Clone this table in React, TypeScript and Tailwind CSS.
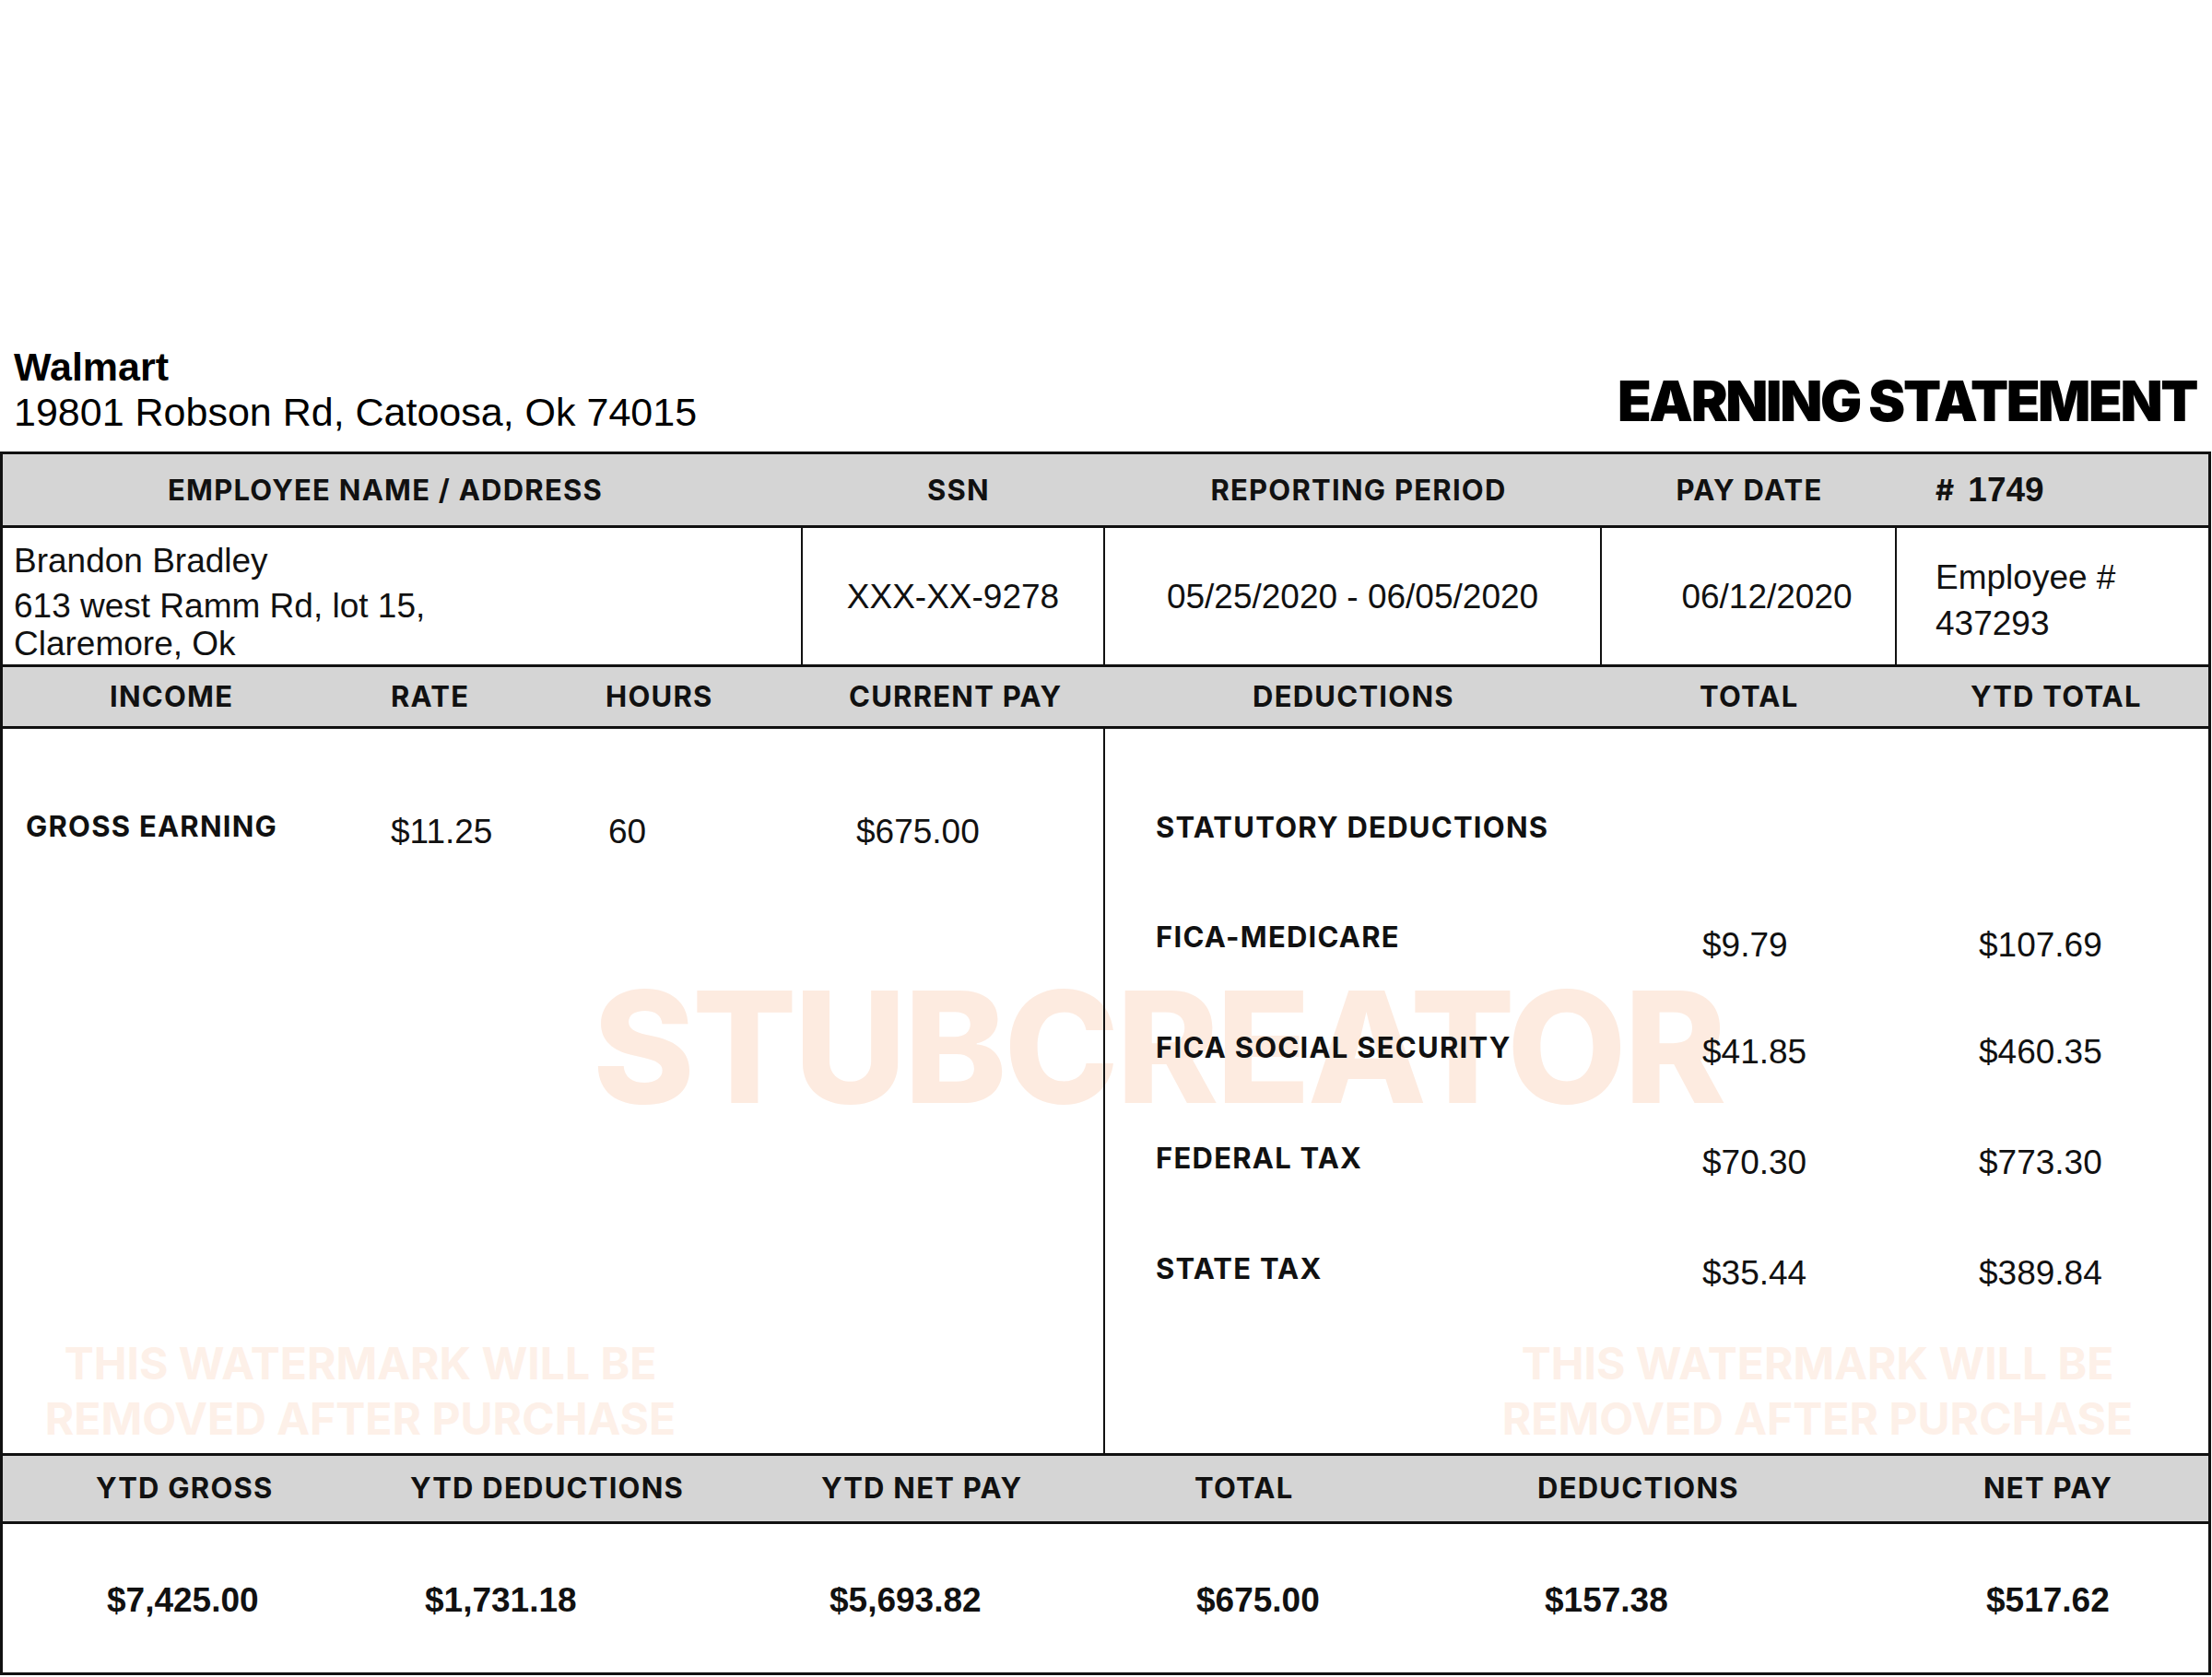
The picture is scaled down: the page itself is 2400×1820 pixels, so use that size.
const head = "font-['Inter',sans-serif] font-bold text-[31px] tracking-[0.04em] leading-none text-[#111]"
const arial = "font-['Liberation_Sans',Arial,sans-serif] text-[37px] leading-none text-[#111]"
const arialBold = "font-['Liberation_Sans',Arial,sans-serif] font-bold text-[37px] leading-none text-[#111]"

const deductions = [
  { label: 'FICA-MEDICARE', total: '$9.79', ytd: '$107.69' },
  { label: 'FICA SOCIAL SECURITY', total: '$41.85', ytd: '$460.35' },
  { label: 'FEDERAL TAX', total: '$70.30', ytd: '$773.30' },
  { label: 'STATE TAX', total: '$35.44', ytd: '$389.84' },
]

const summary = [
  { label: 'YTD GROSS', value: '$7,425.00', w: 'w-[442px]', hp: 'pl-[101px]', vp: 'pl-[113px]' },
  { label: 'YTD DEDUCTIONS', value: '$1,731.18', w: 'w-[446px]', hp: 'pl-0', vp: 'pl-[16px]' },
  { label: 'YTD NET PAY', value: '$5,693.82', w: 'w-[405px]', hp: 'pl-0', vp: 'pl-[9px]' },
  { label: 'TOTAL', value: '$675.00', w: 'w-[372px]', hp: 'pl-0', vp: 'pl-[2px]' },
  { label: 'DEDUCTIONS', value: '$157.38', w: 'w-[484px]', hp: 'pl-0', vp: 'pl-[8px]' },
  { label: 'NET PAY', value: '$517.62', w: 'flex-1', hp: 'pl-0', vp: 'pl-[3px]' },
]

function Watermark({ className }: { className: string }) {
  return (
    <div
      className={`absolute z-0 w-[800px] text-center font-['Inter',sans-serif] font-bold text-[48px] leading-[60px] text-[#fdf0e8] ${className}`}
    >
      THIS WATERMARK WILL BE
      <br />
      REMOVED AFTER PURCHASE
    </div>
  )
}

export default function App() {
  return (
    <div className="w-[2400px] h-[1820px] bg-white flex flex-col">
      {/* company + title */}
      <div className="h-[490px] flex items-end justify-between pb-[18px] pl-[15px] pr-[17px]">
        <div className="font-['Liberation_Sans',Arial,sans-serif] text-[43px] leading-[49px] text-black">
          <div className="font-bold">Walmart</div>
          <div>19801 Robson Rd, Catoosa, Ok 74015</div>
        </div>
        <div className="mb-[7px] font-['Inter',sans-serif] font-black text-[60px] leading-none tracking-[-0.04em] text-black">
          EARNING STATEMENT
        </div>
      </div>

      <div className="w-[2399px] border-[3px] border-[#111] flex flex-col">
        {/* header row 1 */}
        <div className="h-[77px] flex bg-[#d5d5d5]">
          <div className="w-[868px] flex items-center justify-center pr-[38px]">
            <span className={head}>EMPLOYEE NAME / ADDRESS</span>
          </div>
          <div className="w-[328px] flex items-center justify-center pl-[10px]">
            <span className={head}>SSN</span>
          </div>
          <div className="w-[539px] flex items-center justify-center pl-[11px]">
            <span className={head}>REPORTING PERIOD</span>
          </div>
          <div className="w-[320px] flex items-center justify-center">
            <span className={head}>PAY DATE</span>
          </div>
          <div className="flex-1 flex items-center pl-[42px] gap-[14px]">
            <span className={head}>#</span>
            <span className={arialBold}>1749</span>
          </div>
        </div>

        {/* employee info */}
        <div className="h-[151px] flex border-t-[3px] border-[#111]">
          <div className="w-[868px] border-r-2 border-[#111] pl-[12px] pt-[15px] font-['Liberation_Sans',Arial,sans-serif] text-[37px] leading-[41px] text-[#111]">
            <div>Brandon Bradley</div>
            <div className="mt-[8px]">613 west Ramm Rd, lot 15,</div>
            <div>Claremore, Ok</div>
          </div>
          <div className="w-[328px] border-r-2 border-[#111] flex items-center justify-center">
            <span className={arial}>XXX-XX-9278</span>
          </div>
          <div className="w-[539px] border-r-2 border-[#111] flex items-center justify-center">
            <span className={arial}>05/25/2020 - 06/05/2020</span>
          </div>
          <div className="w-[320px] border-r-2 border-[#111] flex items-center justify-center pl-[40px]">
            <span className={arial}>06/12/2020</span>
          </div>
          <div className="flex-1 flex items-center pl-[42px]">
            <div className="mt-[10px] font-['Liberation_Sans',Arial,sans-serif] text-[37px] leading-[50px] text-[#111]">
              <div>Employee #</div>
              <div>437293</div>
            </div>
          </div>
        </div>

        {/* header row 2 */}
        <div className="h-[67px] flex items-center bg-[#d5d5d5] border-t-[3px] border-[#111]">
          <div className="w-[421px] pl-[116px]"><span className={head}>INCOME</span></div>
          <div className="w-[233px]"><span className={head}>RATE</span></div>
          <div className="w-[264px]"><span className={head}>HOURS</span></div>
          <div className="w-[278px]"><span className={head}>CURRENT PAY</span></div>
          <div className="w-[645px] pl-[160px]"><span className={head}>DEDUCTIONS</span></div>
          <div className="w-[294px]"><span className={head}>TOTAL</span></div>
          <div className="flex-1"><span className={head}>YTD TOTAL</span></div>
        </div>

        {/* body */}
        <div className="relative isolate h-[789px] flex border-t-[3px] border-[#111]">
          <div className="absolute z-0 left-[640px] top-[261px] font-['Inter',sans-serif] font-extrabold text-[168px] leading-none tracking-[-0.018em] text-[#fdebe0]">
            STUBCREATOR
          </div>
          <Watermark className="left-[-12px] top-[659px]" />
          <Watermark className="left-[1569px] top-[659px]" />

          <div className="relative z-10 w-[1196px] border-r-2 border-[#111] pt-[46px]">
            <div className="h-[120px] flex items-center">
              <div className="w-[421px] pl-[25px]"><span className={head}>GROSS EARNING</span></div>
              <div className="w-[236px] mt-[10px]"><span className={arial}>$11.25</span></div>
              <div className="w-[269px] mt-[10px]"><span className={arial}>60</span></div>
              <div className="flex-1 mt-[10px]"><span className={arial}>$675.00</span></div>
            </div>
          </div>

          <div className="relative z-10 flex-1 pt-[46px]">
            <div className="h-[120px] flex items-center pl-[55px]">
              <span className={head}>STATUTORY DEDUCTIONS</span>
            </div>
            {deductions.map((d, i) => (
              <div key={d.label} className="h-[120px] flex items-center">
                <div className="w-[648px] pl-[55px]"><span className={head}>{d.label}</span></div>
                <div className={`w-[300px] ${i === 0 ? 'mt-[16px]' : 'mt-[8px]'}`}>
                  <span className={arial}>{d.total}</span>
                </div>
                <div className={`flex-1 ${i === 0 ? 'mt-[16px]' : 'mt-[8px]'}`}>
                  <span className={arial}>{d.ytd}</span>
                </div>
              </div>
            ))}
          </div>
        </div>

        {/* summary header */}
        <div className="h-[74px] flex items-center bg-[#d5d5d5] border-t-[3px] border-[#111]">
          {summary.map((s) => (
            <div key={s.label} className={`${s.w} ${s.hp}`}>
              <span className={head}>{s.label}</span>
            </div>
          ))}
        </div>

        {/* summary values */}
        <div className="h-[164px] flex items-center border-t-[3px] border-[#111]">
          {summary.map((s) => (
            <div key={s.label} className={`${s.w} ${s.vp} mt-[4px]`}>
              <span className={arialBold}>{s.value}</span>
            </div>
          ))}
        </div>
      </div>
    </div>
  )
}
